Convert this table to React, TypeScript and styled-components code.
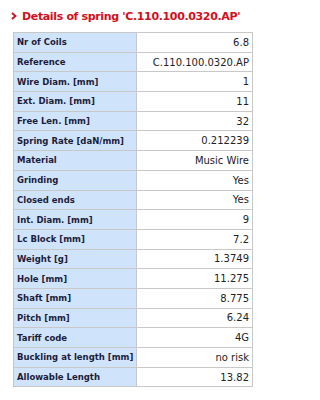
import React from "react";
import styled, { createGlobalStyle } from "styled-components";

const Global = createGlobalStyle`
  html, body { margin: 0; padding: 0; background: #fff; }
  body { font-family: "DejaVu Sans", Verdana, sans-serif; }
`;

const Page = styled.div`
  width: 320px;
  height: 400px;
  overflow: hidden;
  padding: 9px 0 0 11px;
  box-sizing: border-box;
`;

const Title = styled.h2`
  margin: 0 0 9px 0;
  display: flex;
  align-items: center;
  gap: 5px;
  font-size: 11px;
  font-weight: bold;
  color: #d0101c;
  letter-spacing: -0.35px;
  height: 14px;
`;

const Chevron = styled.svg`
  width: 6px;
  height: 8px;
  flex: none;
`;

const Table = styled.table`
  border-collapse: collapse;
  margin-left: 2px;
  width: 240px;
  table-layout: fixed;
  border: 1px solid #c8c8c8;
`;

const Row = styled.tr`
  height: 19.7px;
`;

const Label = styled.th`
  width: 116px;
  background: #cfe4fb;
  border: 1px solid #c8c8c8;
  text-align: left;
  font-size: 8.5px;
  font-weight: bold;
  color: #1c1c3a;
  padding: 0 3px;
  white-space: nowrap;
`;

const Value = styled.td`
  border: 1px solid #c8c8c8;
  text-align: right;
  font-size: 10px;
  color: #222;
  padding: 0 3px;
  white-space: nowrap;
`;

const rows: [string, string][] = [
  ["Nr of Coils", "6.8"],
  ["Reference", "C.110.100.0320.AP"],
  ["Wire Diam. [mm]", "1"],
  ["Ext. Diam. [mm]", "11"],
  ["Free Len. [mm]", "32"],
  ["Spring Rate [daN/mm]", "0.212239"],
  ["Material", "Music Wire"],
  ["Grinding", "Yes"],
  ["Closed ends", "Yes"],
  ["Int. Diam. [mm]", "9"],
  ["Lc Block [mm]", "7.2"],
  ["Weight [g]", "1.3749"],
  ["Hole [mm]", "11.275"],
  ["Shaft [mm]", "8.775"],
  ["Pitch [mm]", "6.24"],
  ["Tariff code", "4G"],
  ["Buckling at length [mm]", "no risk"],
  ["Allowable Length", "13.82"],
];

export default function App() {
  return (
    <Page>
      <Global />
      <Title>
        <Chevron viewBox="0 0 6 8">
          <path d="M1 1 L4.5 4 L1 7" stroke="#d0101c" strokeWidth="1.8" fill="none" />
        </Chevron>
        Details of spring 'C.110.100.0320.AP'
      </Title>
      <Table>
        <tbody>
          {rows.map(([k, v]) => (
            <Row key={k}>
              <Label>{k}</Label>
              <Value>{v}</Value>
            </Row>
          ))}
        </tbody>
      </Table>
    </Page>
  );
}
